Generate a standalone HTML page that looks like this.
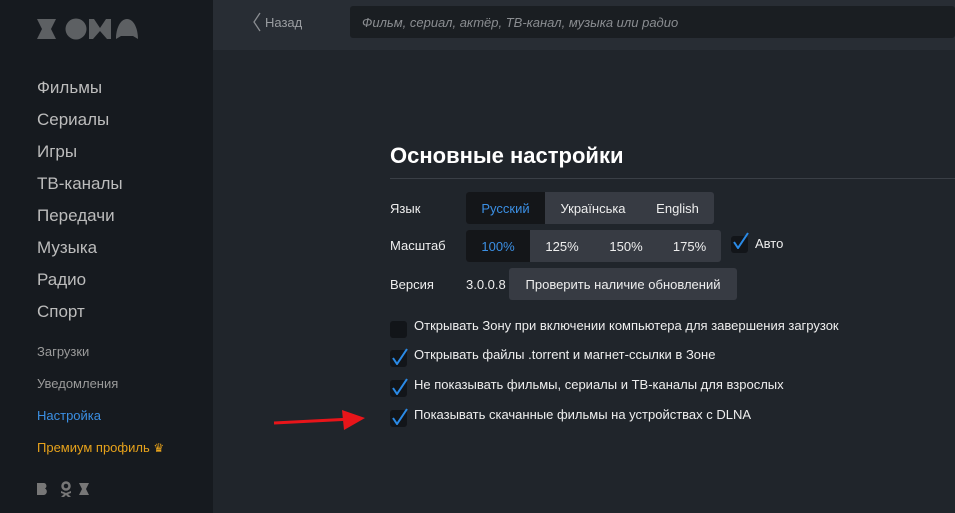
<!DOCTYPE html>
<html><head><meta charset="utf-8"><style>
*{margin:0;padding:0;box-sizing:border-box}
body{width:955px;height:513px;overflow:hidden;background:#20252b;font-family:"Liberation Sans","DejaVu Sans",sans-serif;position:relative}
.side{position:absolute;left:0;top:0;width:213px;height:513px;background:#161a1f}
.top{position:absolute;left:213px;top:0;width:742px;height:50px;background:#282d34}
.a{position:absolute;white-space:nowrap}
.big{font-size:17px;color:#bcbcbc;left:37px}
.sm{font-size:13px;color:#9a9a9a;left:37px}
.search{position:absolute;left:350px;top:6px;width:605px;height:32px;background:#1a1e22;border-radius:3px}
.lbl{font-size:13px;color:#eee}
.seg{position:absolute;height:32px;background:#373b43;border-radius:3px;display:flex;overflow:hidden}
.seg div{font-size:13px;color:#eee;display:flex;align-items:center;justify-content:center;height:100%}
.seg .on{background:#141619;color:#3b8fe3}
.cb{position:absolute;width:17px;height:17px;background:#121519;border-radius:3px}
.cb svg{position:absolute;left:2px;top:0px}
.opt{font-size:13px;color:#eee}
</style></head><body>
<div class="side"></div>
<div class="top"></div>
<svg class="a" style="left:36px;top:18px" width="102" height="22" viewBox="0 0 102 22" fill="#5d6063">
<path d="M1 1h19l-5 10 5 10H1l5-10z"/>
<circle cx="40" cy="11" r="10.5"/>
<path d="M53 1h5l6 9 6-9h5v20h-4l-7-8-7 8h-4z"/>
<path d="M80 21c0-10 4-20 11-20s11 10 11 20l-5-3h-12z"/>
</svg>
<div class="a big" style="top:78px">Фильмы</div>
<div class="a big" style="top:110px">Сериалы</div>
<div class="a big" style="top:142px">Игры</div>
<div class="a big" style="top:174px">ТВ-каналы</div>
<div class="a big" style="top:206px">Передачи</div>
<div class="a big" style="top:238px">Музыка</div>
<div class="a big" style="top:270px">Радио</div>
<div class="a big" style="top:302px">Спорт</div>
<div class="a sm" style="top:344px">Загрузки</div>
<div class="a sm" style="top:376px">Уведомления</div>
<div class="a sm" style="top:408px;color:#3b8fe3">Настройка</div>
<div class="a sm" style="top:440px;color:#e7a21b">Премиум профиль <span style="font-size:12px">♛</span></div>
<svg class="a" style="left:37px;top:481px" width="56" height="16" fill="#777">
<path d="M0 2h7a3 3 0 0 1 1 5.5a3.5 3.5 0 0 1-1 6.5H0z"/>
<circle cx="29" cy="5" r="3.5" fill="none" stroke="#777" stroke-width="2.5"/>
<path d="M24 10l5 2 5-2v2l-3 1 3 3h-3l-2-2-2 2h-3l3-3-3-1z"/>
<path d="M42 2h10l-3 6 3 6H42l3-6z"/>
</svg>

<svg class="a" style="left:252px;top:12px" width="10" height="20"><path d="M8 1L2 10l6 9" stroke="#8a8d91" stroke-width="1.3" fill="none"/></svg>
<div class="a" style="left:265px;top:15px;font-size:13px;color:#9a9da1">Назад</div>
<div class="search"></div>
<div class="a" style="left:362px;top:15px;font-size:13px;font-style:italic;color:#8a8d91">Фильм, сериал, актёр, ТВ-канал, музыка или радио</div>

<div class="a" style="left:390px;top:143px;font-size:22px;font-weight:bold;color:#fff">Основные настройки</div>
<div class="a" style="left:390px;top:178px;width:565px;height:1px;background:#3a3f46"></div>

<div class="a lbl" style="left:390px;top:201px">Язык</div>
<div class="seg" style="left:466px;top:192px;width:248px"><div class="on" style="width:79px">Русский</div><div style="width:96px">Українська</div><div style="width:73px">English</div></div>
<div class="a lbl" style="left:390px;top:238px">Масштаб</div>
<div class="seg" style="left:466px;top:230px;width:255px"><div class="on" style="width:64px">100%</div><div style="width:64px">125%</div><div style="width:64px">150%</div><div style="width:63px">175%</div></div>
<div class="cb" style="left:731px;top:236px"><svg width="16" height="17" style="top:-4px;left:2px"><path d="M1 10l4 6L15 1" stroke="#2a8ae6" stroke-width="2" fill="none"/></svg></div>
<div class="a lbl" style="left:755px;top:236px">Авто</div>
<div class="a lbl" style="left:390px;top:277px">Версия</div>
<div class="a lbl" style="left:466px;top:277px">3.0.0.8</div>
<div class="seg" style="left:509px;top:268px;width:228px"><div style="width:228px">Проверить наличие обновлений</div></div>

<div class="cb" style="left:390px;top:321px"></div>
<div class="a opt" style="left:414px;top:318px">Открывать Зону при включении компьютера для завершения загрузок</div>
<div class="cb" style="left:390px;top:350px"><svg width="16" height="17" style="top:-2px"><path d="M1 10l4 6L15 1" stroke="#2a8ae6" stroke-width="2" fill="none"/></svg></div>
<div class="a opt" style="left:414px;top:347px">Открывать файлы .torrent и магнет-ссылки в Зоне</div>
<div class="cb" style="left:390px;top:380px"><svg width="16" height="17" style="top:-2px"><path d="M1 10l4 6L15 1" stroke="#2a8ae6" stroke-width="2" fill="none"/></svg></div>
<div class="a opt" style="left:414px;top:377px">Не показывать фильмы, сериалы и ТВ-каналы для взрослых</div>
<div class="cb" style="left:390px;top:410px"><svg width="16" height="17" style="top:-2px"><path d="M1 10l4 6L15 1" stroke="#2a8ae6" stroke-width="2" fill="none"/></svg></div>
<div class="a opt" style="left:414px;top:407px">Показывать скачанные фильмы на устройствах с DLNA</div>

<svg class="a" style="left:272px;top:408px" width="95" height="24"><path d="M2 15L80 11" stroke="#e8151a" stroke-width="3"/><path d="M70 2L93 10L72 22z" fill="#e8151a"/></svg>
</body></html>
